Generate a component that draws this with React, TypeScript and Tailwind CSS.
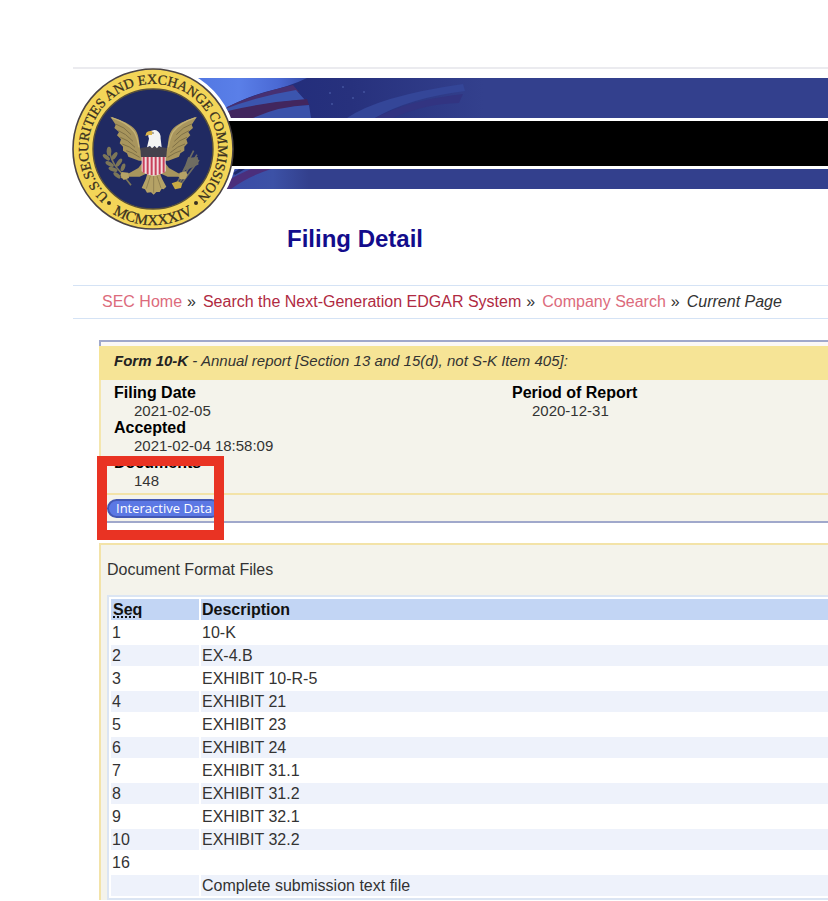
const documents = [
  { seq: '1', description: '10-K' },
  { seq: '2', description: 'EX-4.B' },
  { seq: '3', description: 'EXHIBIT 10-R-5' },
  { seq: '4', description: 'EXHIBIT 21' },
  { seq: '5', description: 'EXHIBIT 23' },
  { seq: '6', description: 'EXHIBIT 24' },
  { seq: '7', description: 'EXHIBIT 31.1' },
  { seq: '8', description: 'EXHIBIT 31.2' },
  { seq: '9', description: 'EXHIBIT 32.1' },
  { seq: '10', description: 'EXHIBIT 32.2' },
  { seq: '16', description: '' },
  { seq: '', description: 'Complete submission text file' },
];

function Wing() {
  return (
    <g>
      <path
        d="M150 184 C172 192 202 200 220 218 C238 236 234 258 240 280 L252 316 L236 316 L220 310 L204 304 L200 294 L188 286 L188 274 L178 264 L182 252 L170 240 L176 230 L162 218 L166 208 L150 184 Z"
        fill="#a8955d"
      />
      <g fill="none" stroke="#776a42" strokeWidth="2.5">
        <path d="M166 206 Q192 214 212 238" />
        <path d="M174 226 Q196 234 218 258" />
        <path d="M180 246 Q202 252 224 276" />
        <path d="M186 266 Q208 272 230 292" />
        <path d="M198 286 Q214 290 238 306" />
      </g>
      <path d="M154 187 Q202 202 222 230 Q232 248 236 276" fill="none" stroke="#c4b276" strokeWidth="4" />
      <path d="M248 320 L234 338 L206 354 L184 356 L182 368 L196 372 L206 364 L238 364 L264 352 Z" fill="#a8955d" />
    </g>
  );
}

function Seal() {
  return (
    <svg viewBox="0 0 168 168" className="block h-[168px] w-[168px]" role="img" aria-label="U.S. Securities and Exchange Commission seal">
      <defs>
        <path id="seal-upper" d="M84 149 A65 65 0 1 1 84.1 149" />
        <path id="seal-lower" d="M8 84 A76 76 0 0 0 160 84" />
      </defs>
      {/* white rim, kept below the header rule */}
      <path d="M46 9 A84 84 0 1 0 122 9 Z" fill="#fff" />
      <path d="M150 56 H168 V101 H150 Z" fill="#000" />
      <circle cx="84" cy="84" r="80" fill="#f3d558" stroke="#4a4344" strokeWidth="1.6" />
      <circle cx="84" cy="84" r="60" fill="#202a62" stroke="#5a5138" strokeWidth="1.4" />
      <g fill="#3a3120" stroke="#3a3120" strokeWidth="0.3" fontFamily="'Liberation Serif', serif" textAnchor="middle">
        <text fontSize="14">
          <textPath href="#seal-upper" startOffset="50%">U.S.SECURITIES AND EXCHANGE COMMISSION</textPath>
        </text>
        <text fontSize="15">
          <textPath href="#seal-lower" startOffset="50%">MCMXXXIV</textPath>
        </text>
      </g>
      <circle cx="40" cy="138" r="2" fill="#3a3120" />
      <circle cx="127" cy="138" r="2" fill="#3a3120" />

      <g transform="scale(0.3333) translate(-26 -29)">
        {/* olive branch */}
        <path d="M146 282 Q152 316 170 338 Q188 358 212 390" fill="none" stroke="#7d7758" strokeWidth="5" />
        <g fill="#7d7758">
          <ellipse cx="146" cy="288" rx="7" ry="14" />
          <ellipse cx="138" cy="306" rx="6" ry="13" transform="rotate(-50 138 306)" />
          <ellipse cx="162" cy="302" rx="6" ry="14" transform="rotate(35 162 302)" />
          <ellipse cx="148" cy="326" rx="6" ry="14" transform="rotate(-60 148 326)" />
          <ellipse cx="176" cy="322" rx="6" ry="14" transform="rotate(35 176 322)" />
          <ellipse cx="158" cy="342" rx="6" ry="14" transform="rotate(-70 158 342)" />
          <ellipse cx="188" cy="336" rx="6" ry="12" transform="rotate(20 188 336)" />
          <ellipse cx="170" cy="360" rx="6" ry="13" transform="rotate(-50 170 360)" />
        </g>
        {/* arrows */}
        <g fill="none" stroke="#6f6d62" strokeWidth="5">
          <path d="M352 380 L400 286 M358 382 L410 298 M364 384 L416 314 M370 350 L386 306" />
          <path d="M376 342 L388 310 L410 308 L412 326 L386 338 Z" fill="#6f6d62" />
        </g>
        {/* tail */}
        <path d="M262 352 L298 352 L306 372 L318 394 L310 402 L304 400 L298 410 L288 410 L280 418 L272 411 L260 412 L254 402 L244 398 L256 372 Z" fill="#b5a266" />
        <path d="M270 362 L258 400 M280 362 V412 M290 362 L302 398" stroke="#8a7b4d" strokeWidth="2.5" />
        <Wing />
        <g transform="translate(560 0) scale(-1 1)">
          <Wing />
        </g>
        {/* shield */}
        <path d="M244 300 H316 V348 Q306 358 280 361 Q254 358 244 348 Z" fill="#f1dde0" />
        <path d="M250 302 V352 M262 302 V357 M274 302 V359 M286 302 V359 M298 302 V357 M310 302 V352" stroke="#c8405a" strokeWidth="6" />
        <path d="M240 278 Q280 270 320 278 L318 305 H242 Z" fill="#45424d" />
        {/* head */}
        <path d="M260 276 L266 250 Q262 240 266 232 Q274 222 288 225 Q302 232 301 250 L304 276 L296 272 L290 279 L283 272 L275 279 L269 272 Z" fill="#f4f4f4" />
        <path d="M276 228 Q264 225 258 232 L255 242 L264 239 L275 239 Z" fill="#dcb54a" />
        <circle cx="278" cy="233" r="2" fill="#3b3420" />
        <path d="M334 384 L352 378 L366 384 L362 398 L344 402 Z" fill="#c8aa45" />
        <path d="M358 352 L376 348 L382 358 L374 372 L358 372 Z" fill="#b5a266" />
        <path d="M204 352 L184 350 L180 360 L190 374 L206 368 Z" fill="#b5a266" />
      </g>
    </svg>
  );
}

function FlagTop() {
  return (
    <svg viewBox="0 0 330 40" className="block h-[40px] w-[330px]" aria-hidden="true">
      <defs>
        <linearGradient id="sky" x1="0" x2="1">
          <stop offset="0" stopColor="#4a70dc" />
          <stop offset="0.26" stopColor="#5a7fe8" />
          <stop offset="0.38" stopColor="#4a69d4" />
          <stop offset="0.48" stopColor="#3348a0" />
        </linearGradient>
        <linearGradient id="canton" x1="0" x2="1">
          <stop offset="0" stopColor="#1f2a7a" />
          <stop offset="0.5" stopColor="#27317d" />
          <stop offset="1" stopColor="#33408d" />
        </linearGradient>
      </defs>
      <rect width="330" height="40" fill="url(#sky)" />
      <path d="M66 34 Q88 21 112 14 Q138 8 154 0 H330 V40 H66 Z" fill="url(#canton)" />
      <path d="M74 29 Q100 16 140 7 L146 14 Q112 18 74 33 Z" fill="#473072" />
      <path d="M72 31 Q106 18 143 12 L152 22 Q112 24 70 36 Z" fill="#3b55ae" />
      <path d="M70 34 Q112 24 154 21 L156 27 Q124 29 104 40 H70 Z" fill="#42265e" />
      <path d="M100 40 Q126 28 156 27 L158 40 Z" fill="#3b52aa" />
      <path d="M194 40 Q226 18 310 6 L312 13 Q256 20 222 40 Z" fill="#344698" />
      <path d="M222 40 Q256 22 310 16 L306 25 Q270 26 240 40 Z" fill="#323481" />
      <g fill="#43539f">
        <circle cx="177" cy="15" r="1" />
        <circle cx="190" cy="9" r="1" />
        <circle cx="179" cy="26" r="1" />
        <circle cx="200" cy="20" r="1" />
        <circle cx="211" cy="14" r="1" />
      </g>
    </svg>
  );
}

function FlagBottom() {
  return (
    <svg viewBox="0 0 200 20" className="block h-[20px] w-[200px]" aria-hidden="true">
      <defs>
        <linearGradient id="fold" x1="0" x2="1">
          <stop offset="0.4" stopColor="#3a4ca6" />
          <stop offset="0.6" stopColor="#3c51a6" />
          <stop offset="0.78" stopColor="#33408d" />
        </linearGradient>
      </defs>
      <rect width="200" height="20" fill="url(#fold)" />
      <path d="M70 20 V14 Q88 4 98 0 H118 Q94 8 78 20 Z" fill="#4b2f7c" />
      <path d="M80 4 L86 0 H92 L82 6 Z" fill="#1f2a6b" />
    </svg>
  );
}

function Separator() {
  return <span className="ml-[5px] mr-[7px] text-[#333]">»</span>;
}

export default function App() {
  return (
    <div className="min-h-screen overflow-x-hidden bg-white pt-[67px] font-['Liberation_Sans',Arial,sans-serif] text-[16px] text-[#333]">
      <header className="pl-[73px]">
        <div className="relative border-t-2 border-[#ebebef] pt-[9px]">
          <div className="ml-[80px] flex flex-col gap-[3px]">
            <div className="h-[40px] bg-[#33408d]">
              <FlagTop />
            </div>
            <div className="h-[45px] bg-black" />
            <div className="h-[20px] bg-[#33408d]">
              <FlagBottom />
            </div>
          </div>
          <div className="absolute -left-1 -top-1">
            <Seal />
          </div>
        </div>
        <h1 className="mt-[34px] pl-[214px] text-[24px] font-bold leading-8 text-[#130c8c]">Filing Detail</h1>
        <nav aria-label="Breadcrumb" className="mt-[30px] flex h-[34px] items-center whitespace-nowrap border-y border-[#d5e3f5] pl-[29px]">
          <a href="#home" className="text-[#dc6b7c]">SEC Home</a>
          <Separator />
          <a href="#search" className="text-[#b02a42]">Search the Next-Generation EDGAR System</a>
          <Separator />
          <a href="#company" className="text-[#dc6b7c]">Company Search</a>
          <Separator />
          <span className="italic" aria-current="page">Current Page</span>
        </nav>
      </header>

      <main className="pl-[99px]">
        <section className="mt-[21px] border-y-2 border-[#a0a8cb] bg-[#f4f3eb]">
          <div className="h-1 border-l-2 border-[#a0a8cb] bg-[#fbf8f6]" />
          <div className="flex h-[34px] items-center whitespace-nowrap bg-[#f6e496] pb-1 pl-[15px] text-[15px] italic">
            <p>
              <strong className="text-[#222]">Form 10-K</strong> - Annual report [Section 13 and 15(d), not S-K Item 405]:
            </p>
          </div>
          <div className="relative border-l-2 border-[#f4e6ae]">
            <div className="flex h-[115px] border-b-2 border-[#f3e3a8] pl-[13px] pt-1">
              <dl className="w-[398px]">
                <dt className="font-bold leading-[18px] text-black">Filing Date</dt>
                <dd className="pl-5 text-[15px] leading-[17px]">2021-02-05</dd>
                <dt className="font-bold leading-[18px] text-black">Accepted</dt>
                <dd className="pl-5 text-[15px] leading-[17px]">2021-02-04 18:58:09</dd>
                <dt className="font-bold leading-[18px] text-black">Documents</dt>
                <dd className="pl-5 text-[15px] leading-[17px]">148</dd>
              </dl>
              <dl>
                <dt className="font-bold leading-[18px] text-black">Period of Report</dt>
                <dd className="pl-5 text-[15px] leading-[17px]">2020-12-31</dd>
              </dl>
            </div>
            <div className="flex h-[26px] items-center pl-[6px]">
              <button className="h-[19px] whitespace-nowrap rounded-full border-2 border-[#4358b4] bg-[#5b78e4] px-[7px] font-['Open_Sans',sans-serif] text-[13px] leading-[15px] text-white">
                Interactive Data
              </button>
            </div>
            {/* highlight around the interactive data button */}
            <div className="pointer-events-none absolute -left-1 top-[76px] h-[84px] w-[127px] border-[10px] border-[#e93323]" />
          </div>
        </section>

        <section className="mt-[20px] border-l-2 border-t-2 border-[#f3e3a8] bg-[#f4f3eb] pl-[6px] pt-[13px]">
          <h2 className="leading-6">Document Format Files</h2>
          <div className="-mr-1 mt-[13px] border-y-2 border-l-2 border-[#dbe5f3] bg-white">
            <table className="w-full border-separate border-spacing-[2px] text-left">
              <thead>
                <tr className="h-[21px] bg-[#c2d5f4] leading-[21px] text-[#111]">
                  <th scope="col" className="w-[88px] pl-[2px] font-bold">
                    <abbr title="Sequence Number" className="underline decoration-dotted decoration-2">Seq</abbr>
                  </th>
                  <th scope="col" className="pl-px font-bold">Description</th>
                </tr>
              </thead>
              <tbody className="leading-[21px]">
                {documents.map((doc, i) => (
                  <tr key={i} className={i % 2 ? 'h-[21px] bg-[#eef2fb]' : 'h-[21px] bg-white'}>
                    <td className="pl-px">{doc.seq}</td>
                    <td className="pl-px">{doc.description}</td>
                  </tr>
                ))}
              </tbody>
            </table>
          </div>
        </section>
      </main>
    </div>
  );
}
